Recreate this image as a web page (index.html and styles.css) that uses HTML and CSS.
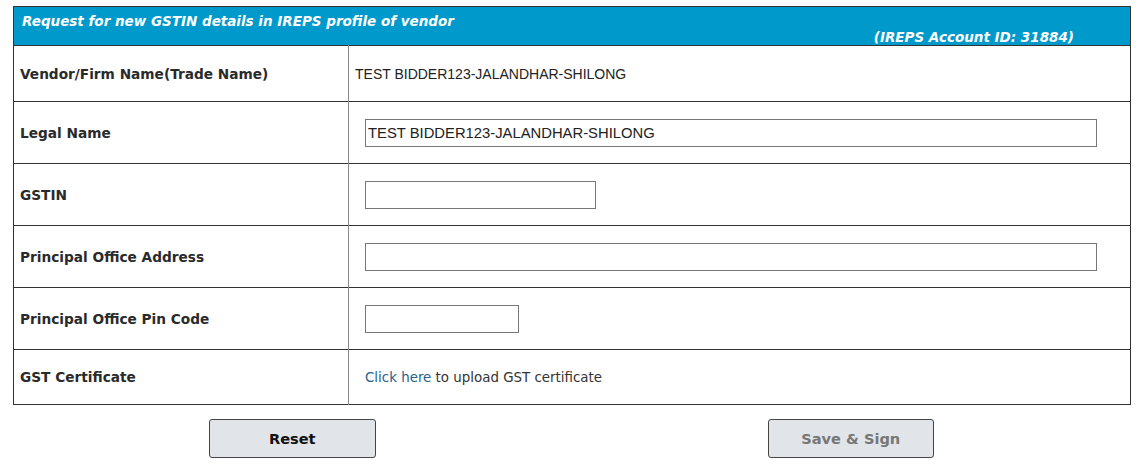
FILE: index.html
```html
<!DOCTYPE html>
<html>
<head>
<meta charset="utf-8">
<link rel="stylesheet" href="styles.css">
</head>
<body>
<div class="wrap">
  <table class="form">
    <colgroup><col class="c1"><col class="c2"></colgroup>
    <tr class="head">
      <td colspan="2">
        <div class="title">Request for new GSTIN details in IREPS profile of vendor</div>
        <div class="acct">(IREPS Account ID: 31884)</div>
      </td>
    </tr>
    <tr class="r1">
      <td class="lbl">Vendor/Firm Name(Trade Name)</td>
      <td class="val"><span class="plain">TEST BIDDER123-JALANDHAR-SHILONG</span></td>
    </tr>
    <tr class="r">
      <td class="lbl">Legal Name</td>
      <td class="val"><input class="inp wide" type="text" value="TEST BIDDER123-JALANDHAR-SHILONG"></td>
    </tr>
    <tr class="r">
      <td class="lbl">GSTIN</td>
      <td class="val"><input class="inp gst" type="text"></td>
    </tr>
    <tr class="r">
      <td class="lbl">Principal Office Address</td>
      <td class="val"><input class="inp wide" type="text"></td>
    </tr>
    <tr class="r">
      <td class="lbl">Principal Office Pin Code</td>
      <td class="val"><input class="inp pin" type="text"></td>
    </tr>
    <tr class="r6">
      <td class="lbl">GST Certificate</td>
      <td class="val cert"><a href="#" class="link">Click here</a> to upload GST certificate</td>
    </tr>
  </table>
  <div class="actions">
    <div class="half"><button class="btn">Reset</button></div>
    <div class="half"><button class="btn disabled">Save &amp; Sign</button></div>
  </div>
</div>
</body>
</html>
```
FILE: styles.css
```css
html, body { margin: 0; padding: 0; background: #fff; }
.wrap { padding: 6px 11px 0 13px; width: 1117px; }
.form {
  width: 1117px;
  border-collapse: collapse;
  border: 1px solid #333;
  font-family: "DejaVu Sans", Verdana, sans-serif;
  table-layout: fixed;
}
.c1 { width: 335px; }
.c2 { width: 782px; }
.form td { padding: 0; border-top: 1px solid #333; }
.head td {
  background: #0099cc;
  color: #fff;
  height: 38px;
  border: none;
  vertical-align: top;
  font-style: italic;
  font-weight: bold;
  font-size: 13.5px;
}
.title { padding: 7px 0 0 8px; line-height: 15px; }
.acct { text-align: right; padding-right: 56px; line-height: 15px; margin-top: 1px; }
.lbl {
  padding-left: 6px !important;
  font-weight: bold;
  font-size: 13.7px;
  color: #2a2a2a;
  border-right: 1px solid #888;
}
.r1 td { height: 55px; }
.r td { height: 61px; }
.r6 td { height: 54px; }
.val { padding-left: 16px !important; }
.r1 .val { padding-left: 6px !important; }
.plain { font-family: "Liberation Sans", Arial, sans-serif; font-size: 14px; color: #222; }
.inp {
  box-sizing: border-box;
  height: 28px;
  border: 1px solid #777;
  font-family: "Liberation Sans", Arial, sans-serif;
  font-size: 14.8px;
  color: #222;
  padding: 0 2px;
  margin: 0;
  display: block;
}
.wide { width: 732px; }
.gst { width: 231px; }
.pin { width: 154px; }
.cert { font-size: 13.4px; color: #333; }
.link { color: #2a5f8a; text-decoration: none; }
.actions { display: flex; padding-top: 14px; }
.half { flex: 1; display: flex; justify-content: center; }
.btn {
  width: 167px;
  height: 39px;
  background: #e1e5ea;
  border: 1px solid #444;
  border-radius: 3px;
  font-family: "DejaVu Sans", Verdana, sans-serif;
  font-weight: bold;
  font-size: 14.6px;
  color: #111;
}
.btn.disabled { color: #777; width: 166px; }
```
